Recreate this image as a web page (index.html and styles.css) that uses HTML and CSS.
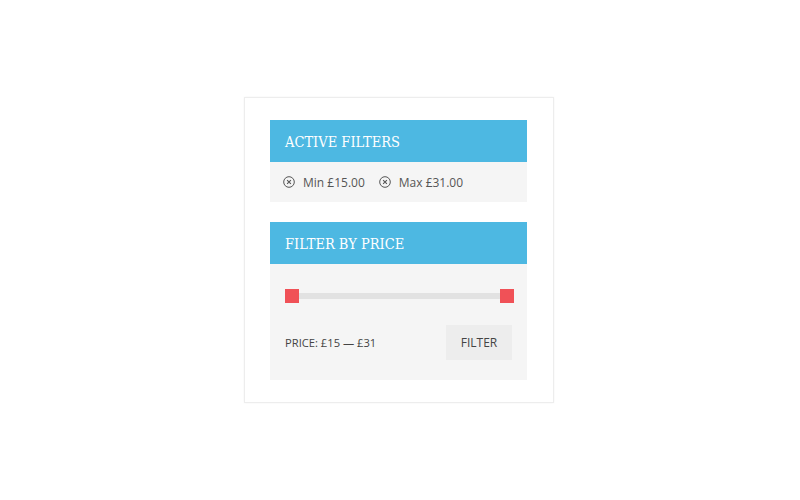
FILE: index.html
```html
<!DOCTYPE html>
<html>
<head>
<meta charset="utf-8">
<link rel="stylesheet" href="styles.css">
</head>
<body>
<div class="card">
  <section class="widget">
    <h2 class="widget-title">Active Filters</h2>
    <div class="widget-body filters">
      <a class="chip"><svg class="x-icon" viewBox="0 0 12 12" width="12" height="12"><circle cx="6" cy="6" r="5.3" fill="none" stroke="#555" stroke-width="1"/><path d="M4.1 4.1 L7.9 7.9 M7.9 4.1 L4.1 7.9" stroke="#555" stroke-width="1.1" fill="none"/></svg>Min £15.00</a>
      <a class="chip"><svg class="x-icon" viewBox="0 0 12 12" width="12" height="12"><circle cx="6" cy="6" r="5.3" fill="none" stroke="#555" stroke-width="1"/><path d="M4.1 4.1 L7.9 7.9 M7.9 4.1 L4.1 7.9" stroke="#555" stroke-width="1.1" fill="none"/></svg>Max £31.00</a>
    </div>
  </section>
  <section class="widget">
    <h2 class="widget-title">Filter by Price</h2>
    <div class="widget-body price">
      <div class="slider">
        <span class="handle"></span>
        <span class="track"></span>
        <span class="handle"></span>
      </div>
      <div class="price-row">
        <span class="price-label">Price: £15 — £31</span>
        <button class="btn">Filter</button>
      </div>
    </div>
  </section>
</div>
</body>
</html>
```

FILE: styles.css
```css
html, body {
  margin: 0;
  padding: 0;
  background: #fff;
}
body {
  height: 500px;
  display: flex;
  align-items: center;
  justify-content: center;
  font-family: "Open Sans", "Liberation Sans", sans-serif;
}
.card {
  box-sizing: border-box;
  width: 310px;
  height: 306px;
  margin-left: -2px;
  padding: 22px 26px 0 25px;
  background: #fff;
  border: 1px solid #ededed;
  box-shadow: 0 0 2px rgba(0,0,0,0.05);
  display: flex;
  flex-direction: column;
  gap: 20px;
}
.widget {
  display: flex;
  flex-direction: column;
}
.widget-title {
  margin: 0;
  height: 42px;
  display: flex;
  align-items: center;
  padding: 1px 15px 0;
  box-sizing: border-box;
  background: #4db8e2;
  color: #fff;
  font-family: "DejaVu Serif", "Liberation Serif", serif;
  font-stretch: condensed;
  font-weight: normal;
  font-size: 14.5px;
  text-transform: uppercase;
}
.widget-body {
  background: #f5f5f5;
}
.filters {
  height: 40px;
  box-sizing: border-box;
  padding: 0 13px;
  display: flex;
  align-items: center;
  gap: 14px;
}
.chip {
  display: flex;
  align-items: center;
  gap: 8px;
  font-size: 12px;
  color: #555;
}
.x-icon {
  display: block;
  width: 12px;
  height: 12px;
}
.price {
  padding: 25px 13px 20px 15px;
}
.slider {
  display: flex;
  align-items: center;
  height: 14px;
}
.handle {
  width: 14px;
  height: 14px;
  background: #f05157;
}
.track {
  flex: 1;
  height: 6px;
  background: #e2e2e2;
}
.price-row {
  margin-top: 22px;
  display: flex;
  align-items: center;
  justify-content: space-between;
  padding-right: 2px;
}
.price-label {
  font-size: 11.2px;
  color: #444;
  text-transform: uppercase;
}
.btn {
  width: 66px;
  height: 35px;
  border: 0;
  background: #ededed;
  font-family: "Open Sans", "Liberation Sans", sans-serif;
  font-size: 12px;
  color: #444;
  text-transform: uppercase;
  padding: 0;
}
```
